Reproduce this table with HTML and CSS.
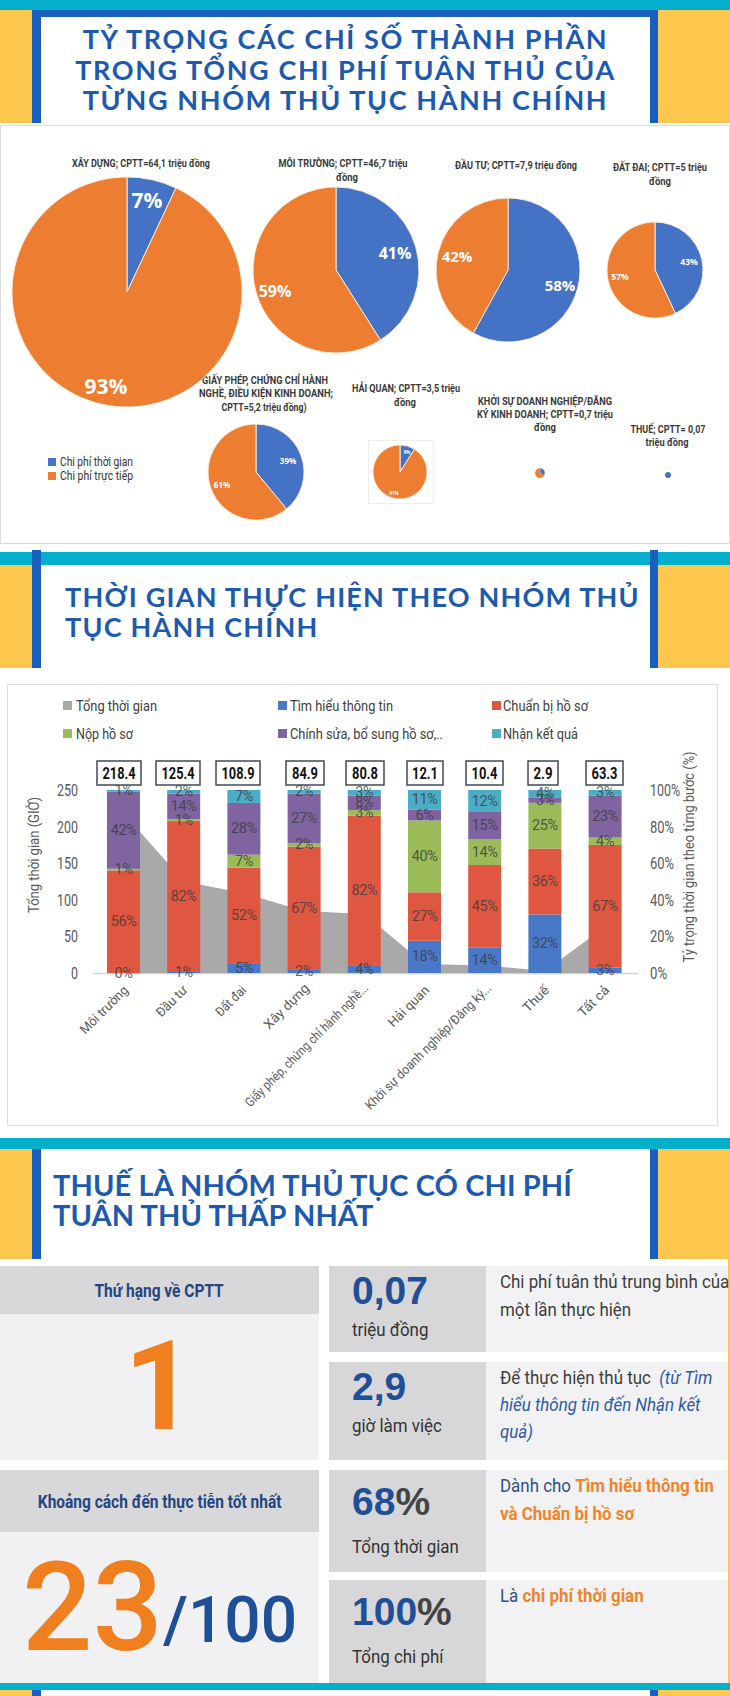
FILE: index.html
```html
<!DOCTYPE html>
<html lang="vi">
<head>
<meta charset="utf-8">
<title>Chi phí tuân thủ thủ tục hành chính</title>
<link rel="stylesheet" href="styles.css">
</head>
<body>
<header class="hdr hdr1">
  <div class="hbox">
    <h1 class="title title1">TỶ TRỌNG CÁC CHỈ SỐ THÀNH PHẦN<br>TRONG TỔNG CHI PHÍ TUÂN THỦ CỦA<br>TỪNG NHÓM THỦ TỤC HÀNH CHÍNH</h1>
  </div>
</header>

<section class="chart chart1">
  <svg width="730" height="422" viewBox="0 123 730 422" class="svg1">
    <rect x="0.5" y="125.5" width="729" height="418" fill="#fff" stroke="#dcdcdc"/>
    <g class="lbl">
      <text x="141" y="167" textLength="138" lengthAdjust="spacingAndGlyphs">XÂY DỰNG; CPTT=64,1 triệu đồng</text>
      <text x="343" y="167" textLength="129" lengthAdjust="spacingAndGlyphs">MÔI TRƯỜNG; CPTT=46,7 triệu</text>
      <text x="347" y="181" textLength="22" lengthAdjust="spacingAndGlyphs">đồng</text>
      <text x="516" y="169" textLength="122" lengthAdjust="spacingAndGlyphs">ĐẦU TƯ; CPTT=7,9 triệu đồng</text>
      <text x="660" y="171" textLength="94" lengthAdjust="spacingAndGlyphs">ĐẤT ĐAI; CPTT=5 triệu</text>
      <text x="660" y="185" textLength="22" lengthAdjust="spacingAndGlyphs">đồng</text>
      <text x="265" y="384" textLength="126" lengthAdjust="spacingAndGlyphs">GIẤY PHÉP, CHỨNG CHỈ HÀNH</text>
      <text x="266" y="397" textLength="134" lengthAdjust="spacingAndGlyphs">NGHỀ, ĐIỀU KIỆN KINH DOANH;</text>
      <text x="264" y="411" textLength="85" lengthAdjust="spacingAndGlyphs">CPTT=5,2 triệu đồng)</text>
      <text x="406" y="392" textLength="108" lengthAdjust="spacingAndGlyphs">HẢI QUAN; CPTT=3,5 triệu</text>
      <text x="405" y="406" textLength="22" lengthAdjust="spacingAndGlyphs">đồng</text>
      <text x="545" y="405" textLength="134" lengthAdjust="spacingAndGlyphs">KHỞI SỰ DOANH NGHIỆP/ĐĂNG</text>
      <text x="545" y="418" textLength="136" lengthAdjust="spacingAndGlyphs">KÝ KINH DOANH; CPTT=0,7 triệu</text>
      <text x="545" y="431" textLength="22" lengthAdjust="spacingAndGlyphs">đồng</text>
      <text x="668" y="433" textLength="75" lengthAdjust="spacingAndGlyphs">THUẾ; CPTT= 0,07</text>
      <text x="667" y="446" textLength="43" lengthAdjust="spacingAndGlyphs">triệu đồng</text>
    </g>
    <g class="pies" stroke="#fde9d6" stroke-width="1">
      <path class="pb" d="M127,292 L127,177 A115,115 0 0 1 175.97,187.95 Z"/>
      <path class="po" d="M127,292 L175.97,187.95 A115,115 0 1 1 127,177 Z"/>
      <path class="pb" d="M336,270 L336,187 A83,83 0 0 1 380.47,340.08 Z"/>
      <path class="po" d="M336,270 L380.47,340.08 A83,83 0 1 1 336,187 Z"/>
      <path class="pb" d="M508,270 L508,198 A72,72 0 1 1 473.31,333.09 Z"/>
      <path class="po" d="M508,270 L473.31,333.09 A72,72 0 0 1 508,198 Z"/>
      <path class="pb" d="M655,270 L655,222 A48,48 0 0 1 675.44,313.43 Z"/>
      <path class="po" d="M655,270 L675.44,313.43 A48,48 0 1 1 655,222 Z"/>
      <path class="pb" d="M256,472 L256,424 A48,48 0 0 1 286.6,508.98 Z"/>
      <path class="po" d="M256,472 L286.6,508.98 A48,48 0 1 1 256,424 Z"/>
      <rect x="368.5" y="440.5" width="65" height="63" fill="none" stroke="#eeeeee"/>
      <path class="pb" d="M400,472 L400,445 A27,27 0 0 1 414.47,449.2 Z"/>
      <path class="po" d="M400,472 L414.47,449.2 A27,27 0 1 1 400,445 Z"/>
      <path class="pb" d="M540,473 L540,468 A5,5 0 0 1 544.05,475.94 Z" stroke-width="0.3"/>
      <path class="po" d="M540,473 L544.05,475.94 A5,5 0 1 1 540,468 Z" stroke-width="0.3"/>
      <circle class="pb" cx="668" cy="475" r="3" stroke="none"/>
    </g>
    <g class="pct">
      <text x="147" y="208" font-size="21">7%</text>
      <text x="106" y="394" font-size="21">93%</text>
      <text x="395" y="259" font-size="16">41%</text>
      <text x="275" y="297" font-size="16">59%</text>
      <text x="457" y="262" font-size="15">42%</text>
      <text x="560" y="291" font-size="15">58%</text>
      <text x="689" y="265" font-size="8.5">43%</text>
      <text x="620" y="280" font-size="8.5">57%</text>
      <text x="288" y="464" font-size="8">39%</text>
      <text x="222" y="488" font-size="8">61%</text>
      <text x="407" y="454" font-size="4.5">9%</text>
      <text x="394" y="495" font-size="4.5">91%</text>
    </g>
    <rect x="48" y="458" width="8" height="8" class="pb"/>
    <rect x="48" y="472" width="8" height="8" class="po"/>
    <g class="leg1">
      <text x="60" y="466" textLength="73" lengthAdjust="spacingAndGlyphs">Chi phí thời gian</text>
      <text x="60" y="480" textLength="73" lengthAdjust="spacingAndGlyphs">Chi phí trực tiếp</text>
    </g>
  </svg>
</section>

<header class="hdr hdr2">
  <div class="hbox">
    <h2 class="title title2">THỜI GIAN THỰC HIỆN THEO NHÓM THỦ<br>TỤC HÀNH CHÍNH</h2>
  </div>
</header>

<section class="chart chart2">
  <svg width="730" height="465" viewBox="0 668 730 465" class="svg2">
    <rect x="7.5" y="684.5" width="710" height="441" fill="#fff" stroke="#dedede"/>
    <g class="leg2">
      <rect x="63" y="701" width="9" height="9" fill="#a9a9a9"/>
      <text x="76" y="711" textLength="81" lengthAdjust="spacingAndGlyphs">Tổng thời gian</text>
      <rect x="278" y="701" width="9" height="9" class="cb"/>
      <text x="290" y="711" textLength="103" lengthAdjust="spacingAndGlyphs">Tìm hiểu thông tin</text>
      <rect x="492" y="701" width="9" height="9" class="cr"/>
      <text x="503" y="711" textLength="85" lengthAdjust="spacingAndGlyphs">Chuẩn bị hồ sơ</text>
      <rect x="63" y="729" width="9" height="9" class="cg"/>
      <text x="76" y="739" textLength="57" lengthAdjust="spacingAndGlyphs">Nộp hồ sơ</text>
      <rect x="278" y="729" width="9" height="9" class="cp"/>
      <text x="290" y="739" textLength="153" lengthAdjust="spacingAndGlyphs">Chính sửa, bổ sung hồ sơ,..</text>
      <rect x="492" y="729" width="9" height="9" class="ct"/>
      <text x="503" y="739" textLength="75" lengthAdjust="spacingAndGlyphs">Nhận kết quả</text>
    </g>
    <g class="axl">
      <text x="78" y="796" textLength="21" lengthAdjust="spacingAndGlyphs">250</text>
      <text x="78" y="832.6" textLength="21" lengthAdjust="spacingAndGlyphs">200</text>
      <text x="78" y="869.2" textLength="21" lengthAdjust="spacingAndGlyphs">150</text>
      <text x="78" y="905.8" textLength="21" lengthAdjust="spacingAndGlyphs">100</text>
      <text x="78" y="942.4" textLength="14" lengthAdjust="spacingAndGlyphs">50</text>
      <text x="78" y="979" textLength="7" lengthAdjust="spacingAndGlyphs">0</text>
    </g>
    <g class="axr">
      <text x="650" y="796" textLength="30" lengthAdjust="spacingAndGlyphs">100%</text>
      <text x="650" y="832.6" textLength="24" lengthAdjust="spacingAndGlyphs">80%</text>
      <text x="650" y="869.2" textLength="24" lengthAdjust="spacingAndGlyphs">60%</text>
      <text x="650" y="905.8" textLength="24" lengthAdjust="spacingAndGlyphs">40%</text>
      <text x="650" y="942.4" textLength="24" lengthAdjust="spacingAndGlyphs">20%</text>
      <text x="650" y="979" textLength="17" lengthAdjust="spacingAndGlyphs">0%</text>
    </g>
    <text class="axt" transform="translate(39 855) rotate(-90)" textLength="116" lengthAdjust="spacingAndGlyphs">Tổng thời gian (GIỜ)</text>
    <text class="axt" transform="translate(694 857) rotate(-90)" textLength="211" lengthAdjust="spacingAndGlyphs">Tỷ trọng thời gian theo từng bước (%)</text>
    <line x1="93" y1="973.5" x2="638" y2="973.5" stroke="#d4d4d4" stroke-width="1.5"/>
    <polygon fill="#a9a9a9" points="123.5,813.1 183.7,881.2 243.9,893.3 304.1,910.9 364.3,913.9 424.5,964.1 484.7,965.4 544.9,970.9 605.1,926.7 605.1,973 123.5,973"/>
    <g class="bars">
      <rect class="cr" x="107" y="870.52" width="33" height="102.48"/>
      <rect class="cg" x="107" y="868.69" width="33" height="1.83"/>
      <rect class="cp" x="107" y="791.83" width="33" height="76.86"/>
      <rect class="ct" x="107" y="790" width="33" height="1.83"/>

      <rect class="cb" x="167.2" y="971.17" width="33" height="1.83"/>
      <rect class="cr" x="167.2" y="821.11" width="33" height="150.06"/>
      <rect class="cg" x="167.2" y="819.28" width="33" height="1.83"/>
      <rect class="cp" x="167.2" y="793.66" width="33" height="25.62"/>
      <rect class="ct" x="167.2" y="790" width="33" height="3.66"/>

      <rect class="cb" x="227.4" y="963.76" width="33" height="9.24"/>
      <rect class="cr" x="227.4" y="867.64" width="33" height="96.12"/>
      <rect class="cg" x="227.4" y="854.7" width="33" height="12.94"/>
      <rect class="cp" x="227.4" y="802.94" width="33" height="51.76"/>
      <rect class="ct" x="227.4" y="790" width="33" height="12.94"/>

      <rect class="cb" x="287.6" y="969.34" width="33" height="3.66"/>
      <rect class="cr" x="287.6" y="846.73" width="33" height="122.61"/>
      <rect class="cg" x="287.6" y="843.07" width="33" height="3.66"/>
      <rect class="cp" x="287.6" y="793.66" width="33" height="49.41"/>
      <rect class="ct" x="287.6" y="790" width="33" height="3.66"/>

      <rect class="cb" x="347.8" y="965.68" width="33" height="7.32"/>
      <rect class="cr" x="347.8" y="815.62" width="33" height="150.06"/>
      <rect class="cg" x="347.8" y="810.13" width="33" height="5.49"/>
      <rect class="cp" x="347.8" y="795.49" width="33" height="14.64"/>
      <rect class="ct" x="347.8" y="790" width="33" height="5.49"/>

      <rect class="cb" x="408" y="940.71" width="33" height="32.29"/>
      <rect class="cr" x="408" y="892.27" width="33" height="48.44"/>
      <rect class="cg" x="408" y="820.51" width="33" height="71.76"/>
      <rect class="cp" x="408" y="809.75" width="33" height="10.76"/>
      <rect class="ct" x="408" y="790" width="33" height="19.75"/>

      <rect class="cb" x="468.2" y="947.38" width="33" height="25.62"/>
      <rect class="cr" x="468.2" y="865.03" width="33" height="82.35"/>
      <rect class="cg" x="468.2" y="839.41" width="33" height="25.62"/>
      <rect class="cp" x="468.2" y="811.96" width="33" height="27.45"/>
      <rect class="ct" x="468.2" y="790" width="33" height="21.96"/>

      <rect class="cb" x="528.4" y="914.44" width="33" height="58.56"/>
      <rect class="cr" x="528.4" y="848.56" width="33" height="65.88"/>
      <rect class="cg" x="528.4" y="802.81" width="33" height="45.75"/>
      <rect class="cp" x="528.4" y="797.32" width="33" height="5.49"/>
      <rect class="ct" x="528.4" y="790" width="33" height="7.32"/>

      <rect class="cb" x="588.6" y="967.51" width="33" height="5.49"/>
      <rect class="cr" x="588.6" y="844.9" width="33" height="122.61"/>
      <rect class="cg" x="588.6" y="837.58" width="33" height="7.32"/>
      <rect class="cp" x="588.6" y="795.49" width="33" height="42.09"/>
      <rect class="ct" x="588.6" y="790" width="33" height="5.49"/>
    </g>
    <g class="seg">
      <text x="123.5" y="973">0%</text><text x="123.5" y="921.8">56%</text><text x="123.5" y="869.6">1%</text><text x="123.5" y="830.3">42%</text><text x="123.5" y="790.9">1%</text>
      <text x="183.7" y="972.1">1%</text><text x="183.7" y="896.1">82%</text><text x="183.7" y="820.2">1%</text><text x="183.7" y="806.5">14%</text><text x="183.7" y="791.8">2%</text>
      <text x="243.9" y="968.4">5%</text><text x="243.9" y="915.7">52%</text><text x="243.9" y="861.2">7%</text><text x="243.9" y="828.8">28%</text><text x="243.9" y="796.5">7%</text>
      <text x="304.1" y="971.2">2%</text><text x="304.1" y="908">67%</text><text x="304.1" y="844.9">2%</text><text x="304.1" y="818.4">27%</text><text x="304.1" y="791.8">2%</text>
      <text x="364.3" y="969.3">4%</text><text x="364.3" y="890.6">82%</text><text x="364.3" y="812.9">3%</text><text x="364.3" y="802.8">8%</text><text x="364.3" y="792.7">3%</text>
      <text x="424.5" y="956.9">18%</text><text x="424.5" y="916.5">27%</text><text x="424.5" y="856.4">40%</text><text x="424.5" y="815.1">6%</text><text x="424.5" y="799.9">11%</text>
      <text x="484.7" y="960.2">14%</text><text x="484.7" y="906.2">45%</text><text x="484.7" y="852.2">14%</text><text x="484.7" y="825.7">15%</text><text x="484.7" y="801">12%</text>
      <text x="544.9" y="943.7">32%</text><text x="544.9" y="881.5">36%</text><text x="544.9" y="825.7">25%</text><text x="544.9" y="800.1">3%</text><text x="544.9" y="793.7">4%</text>
      <text x="605.1" y="970.3">3%</text><text x="605.1" y="906.2">67%</text><text x="605.1" y="841.2">4%</text><text x="605.1" y="816.5">23%</text><text x="605.1" y="792.7">3%</text>
    </g>
    <g class="vbox">
      <rect x="97" y="761" width="44" height="24"/>
      <rect x="156" y="761" width="44" height="24"/>
      <rect x="216" y="761" width="44" height="24"/>
      <rect x="286" y="761" width="38" height="24"/>
      <rect x="346" y="761" width="38" height="24"/>
      <rect x="407" y="761" width="36" height="24"/>
      <rect x="466" y="761" width="37" height="24"/>
      <rect x="528" y="761" width="30" height="24"/>
      <rect x="586" y="761" width="37" height="24"/>
    </g>
    <g class="vtxt">
      <text x="119" y="779" textLength="33" lengthAdjust="spacingAndGlyphs">218.4</text>
      <text x="178" y="779" textLength="33" lengthAdjust="spacingAndGlyphs">125.4</text>
      <text x="238" y="779" textLength="33" lengthAdjust="spacingAndGlyphs">108.9</text>
      <text x="305" y="779" textLength="26" lengthAdjust="spacingAndGlyphs">84.9</text>
      <text x="365" y="779" textLength="26" lengthAdjust="spacingAndGlyphs">80.8</text>
      <text x="425" y="779" textLength="26" lengthAdjust="spacingAndGlyphs">12.1</text>
      <text x="484.5" y="779" textLength="26" lengthAdjust="spacingAndGlyphs">10.4</text>
      <text x="543" y="779" textLength="19" lengthAdjust="spacingAndGlyphs">2.9</text>
      <text x="604.5" y="779" textLength="26" lengthAdjust="spacingAndGlyphs">63.3</text>
    </g>
    <g class="cat">
      <text transform="translate(129 991) rotate(-45)" textLength="62" lengthAdjust="spacingAndGlyphs">Môi trường</text>
      <text transform="translate(188 991) rotate(-45)" textLength="38" lengthAdjust="spacingAndGlyphs">Đầu tư</text>
      <text transform="translate(247 991) rotate(-45)" textLength="37" lengthAdjust="spacingAndGlyphs">Đất đai</text>
      <text transform="translate(310 989) rotate(-45)" textLength="58" lengthAdjust="spacingAndGlyphs">Xây dựng</text>
      <text transform="translate(369 989) rotate(-45)" textLength="168" lengthAdjust="spacingAndGlyphs">Giấy phép, chứng chỉ hành nghề...</text>
      <text transform="translate(430 991) rotate(-45)" textLength="52" lengthAdjust="spacingAndGlyphs">Hải quan</text>
      <text transform="translate(492 989) rotate(-45)" textLength="172" lengthAdjust="spacingAndGlyphs">Khởi sự doanh nghiệp/Đăng ký...</text>
      <text transform="translate(550 991) rotate(-45)" textLength="31" lengthAdjust="spacingAndGlyphs">Thuế</text>
      <text transform="translate(610 991) rotate(-45)" textLength="38" lengthAdjust="spacingAndGlyphs">Tất cả</text>
    </g>
  </svg>
</section>

<header class="hdr hdr3">
  <div class="hbox">
    <h2 class="title title3">THUẾ LÀ NHÓM THỦ TỤC CÓ CHI PHÍ<br>TUÂN THỦ THẤP NHẤT</h2>
  </div>
</header>

<section class="stats">
  <div class="left">
    <div class="lblock lblock-a">
      <div class="lhead"><span class="cc">Thứ hạng về CPTT</span></div>
      <div class="lbody"><span class="rank">1</span></div>
    </div>
    <div class="lblock lblock-b">
      <div class="lhead lhead-b"><span class="cc">Khoảng cách đến thực tiễn tốt nhất</span></div>
      <div class="lbody"><span class="score">23</span><span class="score-of">/100</span></div>
    </div>
  </div>
  <div class="right">
    <div class="srow r1">
      <div class="num"><div class="big">0,07</div><div class="unit"><span class="cl">triệu đồng</span></div></div>
      <div class="desc"><span class="cl">Chi phí tuân thủ trung bình của<br>một lần thực hiện</span></div>
    </div>
    <div class="srow r2">
      <div class="num"><div class="big">2,9</div><div class="unit"><span class="cl">giờ làm việc</span></div></div>
      <div class="desc"><span class="cl">Để thực hiện thủ tục&nbsp; <em class="note">(từ Tìm<br>hiểu thông tin đến Nhận kết<br>quả)</em></span></div>
    </div>
    <div class="srow r3">
      <div class="num"><div class="big">68<span class="pc">%</span></div><div class="unit"><span class="cl">Tổng thời gian</span></div></div>
      <div class="desc"><span class="cl"><span class="lead">Dành cho</span> <b class="hl">Tìm hiểu thông tin<br>và Chuẩn bị hồ sơ</b></span></div>
    </div>
    <div class="srow r4">
      <div class="num"><div class="big">100<span class="pc">%</span></div><div class="unit"><span class="cl">Tổng chi phí</span></div></div>
      <div class="desc"><span class="cl"><span class="lead">Là</span> <b class="hl">chi phí thời gian</b></span></div>
    </div>
  </div>
</section>

<div class="band"></div>
<div class="hdr4"><div class="hbox"></div></div>
</body>
</html>
```

FILE: styles.css
```css
html, body { margin: 0; padding: 0; }
body {
  width: 730px;
  height: 1696px;
  overflow: hidden;
  background: #fff;
  font-family: "Liberation Sans", Arial, sans-serif;
}

/* section headers */
.hdr { box-sizing: border-box; }
.hbox {
  box-sizing: border-box;
  width: 626px;
  margin-left: 32px;
  border-style: solid;
  border-color: #1b5fbe;
  border-width: 0 8px 0 9px;
  background: #fff;
}
.title {
  margin: 0;
  font-family: Lato, "Open Sans", sans-serif;
  font-weight: 700;
  color: #1d5aad;
  white-space: nowrap;
}
.hdr1 {
  height: 123px;
  padding-top: 10px;
  background: linear-gradient(#03afca 0 10px, #fec84f 10px);
}
.hdr1 .hbox { height: 113px; border-top-width: 7px; padding-top: 7px; }
.title1 { font-size: 27px; line-height: 30.5px; letter-spacing: 1.6px; text-align: center; }

.hdr2 {
  height: 123px;
  padding-top: 5px;
  background: linear-gradient(#fff 0 7px, #03afca 7px 20px, #fec84f 20px);
}
.hdr2 .hbox {
  height: 118px;
  padding: 32px 0 0 24px;
  background: linear-gradient(#fff 0 2px, #03afca 2px 15px, #fff 15px);
}
.title2 { font-size: 27px; line-height: 30px; letter-spacing: 1.2px; }

.hdr3 {
  height: 126px;
  padding-top: 16px;
  background: linear-gradient(#fff 0 5px, #03afca 5px 16px, #fec84f 16px);
}
.hdr3 .hbox { height: 110px; padding: 21px 0 0 12px; }
.title3 { font-size: 29px; line-height: 30px; letter-spacing: 0.1px; }

/* charts */
.chart { height: 422px; }
.chart2 { height: 465px; }
.chart svg { display: block; }
.svg1 .pb, .svg2 .cb { fill: #4472c4; }
.svg1 .po { fill: #ed7d31; }
.lbl text {
  font-family: Roboto, "Liberation Sans", sans-serif;
  font-weight: 700;
  font-size: 10.5px;
  fill: #3a3a3a;
  text-anchor: middle;
}
.pct text {
  font-family: "Open Sans", "Liberation Sans", sans-serif;
  font-weight: 700;
  fill: #fff;
  text-anchor: middle;
}
.leg1 text {
  font-family: Roboto, "Liberation Sans", sans-serif;
  font-size: 12px;
  fill: #333;
}
.svg2 .cb { fill: #4a78c8; }
.svg2 .cr { fill: #df5741; }
.svg2 .cg { fill: #9bbb59; }
.svg2 .cp { fill: #8064a2; }
.svg2 .ct { fill: #4bacc6; }
.leg2 text {
  font-family: Roboto, "Liberation Sans", sans-serif;
  font-size: 15px;
  fill: #404040;
}
.axl text, .axr text {
  font-family: Roboto, "Liberation Sans", sans-serif;
  font-size: 16px;
  fill: #595959;
}
.axl text { text-anchor: end; }
.axt {
  font-family: Roboto, "Liberation Sans", sans-serif;
  font-size: 15px;
  fill: #595959;
  text-anchor: middle;
}
.seg text {
  font-family: Roboto, "Liberation Sans", sans-serif;
  font-size: 14.5px;
  letter-spacing: -0.4px;
  fill: #3a3a3a;
  fill-opacity: 0.8;
  text-anchor: middle;
  dominant-baseline: central;
}
.vbox rect { fill: #fff; stroke: #3f4a57; stroke-width: 1.5; }
.vtxt text {
  font-family: Roboto, "Liberation Sans", sans-serif;
  font-weight: 700;
  font-size: 16px;
  fill: #111;
  text-anchor: middle;
}
.cat text {
  font-family: Roboto, "Liberation Sans", sans-serif;
  font-size: 13px;
  fill: #595959;
  text-anchor: end;
}

/* stats table */
.stats {
  box-sizing: border-box;
  height: 424px;
  padding-top: 7px;
  display: flex;
  gap: 10px;
  border-right: 2px solid #fec84f;
  font-family: Roboto, "Liberation Sans", sans-serif;
}
.cc {
  display: inline-block;
  white-space: nowrap;
  transform: scaleX(0.86);
}
.cl {
  display: inline-block;
  white-space: nowrap;
  transform: scaleX(0.89);
  transform-origin: left top;
}
.left { width: 319px; display: flex; flex-direction: column; gap: 10px; }
.lblock { display: flex; flex-direction: column; background: #f1f1f3; }
.lblock-a { height: 194px; }
.lblock-b { height: 213px; }
.lhead {
  height: 48px;
  flex: none;
  display: flex;
  align-items: center;
  justify-content: center;
  background: #d8d8da;
  color: #23467f;
  font-weight: 700;
  font-size: 18px;
}
.lhead-b { height: 62px; }
.lbody {
  flex: 1;
  display: flex;
  align-items: center;
  justify-content: center;
  line-height: 1;
}
.rank { font-size: 124px; font-weight: 700; color: #f0801f; }
.score { font-size: 124px; font-weight: 500; color: #f0801f; }
.score-of { font-size: 64px; font-weight: 500; color: #1f4f96; align-self: flex-end; margin-bottom: 30px; }

.right { width: 399px; display: flex; flex-direction: column; gap: 10px; }
.srow { display: flex; background: #f2f2f4; }
.r1 { height: 86px; }
.r2 { height: 98px; }
.r3 { height: 102px; margin-bottom: -2px; }
.r4 { height: 103px; }
.num {
  box-sizing: border-box;
  width: 157px;
  flex: none;
  background: #d7d7d9;
  padding: 5px 0 0 23px;
}
.r3 .num, .r4 .num { padding-top: 12px; }
.big {
  font-family: "Liberation Sans", Arial, sans-serif;
  font-weight: 700;
  font-size: 39px;
  line-height: 40px;
  color: #1f4f96;
}
.pc { color: #444; }
.unit {
  margin-top: 8px;
  font-size: 19px;
  line-height: 22px;
  color: #333;
}
.r3 .unit, .r4 .unit { margin-top: 14px; }
.desc {
  flex: 1;
  padding: 2px 0 0 14px;
  font-size: 19px;
  line-height: 28px;
  color: #3d3d3d;
}
.r2 .desc { line-height: 27px; }
.note { color: #2e5aa8; }
.lead { color: #2f4f8a; }
.hl { color: #f0842a; }

.band { height: 7px; background: #03afca; }
.hdr4 { height: 20px; background: #fec84f; }
.hdr4 .hbox { height: 20px; }
```
